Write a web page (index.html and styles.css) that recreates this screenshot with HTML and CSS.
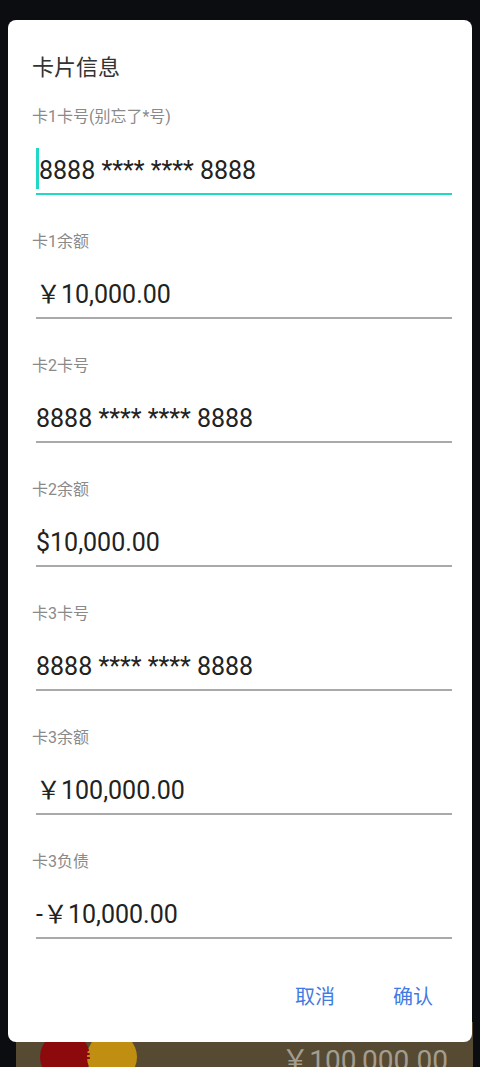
FILE: index.html
```
<!DOCTYPE html>
<html lang="zh-CN">
<head>
<meta charset="UTF-8" />
<meta name="viewport" content="width=device-width, initial-scale=1" />
<title>卡片信息</title>
<link rel="stylesheet" href="styles.css">
</head>
<body>

<div class="dialog">
  <h3 class="dialog-title">卡片信息</h3>

  <div class="field">
    <label>卡1卡号(别忘了*号)</label>
    <div class="input focused"><span class="caret"></span>8888 **** **** 8888</div>
  </div>
  <div class="field">
    <label>卡1余额</label>
    <div class="input">￥10,000.00</div>
  </div>
  <div class="field">
    <label>卡2卡号</label>
    <div class="input">8888 **** **** 8888</div>
  </div>
  <div class="field">
    <label>卡2余额</label>
    <div class="input">$10,000.00</div>
  </div>
  <div class="field">
    <label>卡3卡号</label>
    <div class="input">8888 **** **** 8888</div>
  </div>
  <div class="field">
    <label>卡3余额</label>
    <div class="input">￥100,000.00</div>
  </div>
  <div class="field">
    <label>卡3负债</label>
    <div class="input">-￥10,000.00</div>
  </div>

  <div class="actions">
    <button>取消</button>
    <button>确认</button>
  </div>
</div>

<!-- card behind the dialog -->
<div class="card">
  <svg class="card-logo" width="100" height="40" viewBox="0 0 100 40">
    <defs>
      <clipPath id="overlap">
        <circle cx="25" cy="27" r="25" />
      </clipPath>
    </defs>
    <circle cx="25" cy="27" r="25" fill="#8c0a0c" />
    <circle cx="72" cy="27" r="25" fill="#c08f12" />
    <g clip-path="url(#overlap)" fill="#8c0a0c">
      <rect x="45" y="3" width="30" height="2" />
      <rect x="45" y="7" width="30" height="2" />
      <rect x="45" y="11" width="30" height="2" />
      <rect x="45" y="15" width="30" height="2" />
      <rect x="45" y="19" width="30" height="2" />
      <rect x="45" y="23" width="30" height="2" />
      <rect x="45" y="27" width="30" height="2" />
    </g>
  </svg>
  <div class="card-amount">￥100,000.00</div>
</div>

</body>
</html>
```

FILE: styles.css
```
body {
  margin: 0;
  padding: 20px 0 0 0;
  background: #0c0d11;
  font-family: Roboto, "Noto Sans CJK SC", sans-serif;
  height: 1047px;
  overflow: hidden;
}
.dialog {
  position: relative;
  z-index: 1;
  margin: 0 8px;
  background: #fff;
  border-radius: 8px;
  padding: 33px 20px 23px 24px;
}
.dialog-title {
  margin: 0 0 22px 0;
  font-size: 22px;
  line-height: 30px;
  font-weight: normal;
  color: #333;
}
.field {
  margin-bottom: 35px;
}
.field label {
  display: block;
  font-size: 16px;
  line-height: 24px;
  color: #8a8a8a;
}
.input {
  margin-left: 4px;
  padding: 26px 0 7px 0;
  font-size: 25px;
  line-height: 30px;
  color: #222;
  border-bottom: 2px solid #a9a9a9;
  display: flex;
  align-items: center;
}
.input.focused {
  border-bottom-color: #1fd8c6;
  padding-top: 27px;
  padding-bottom: 7px;
}
.caret {
  width: 3px;
  height: 41px;
  background: #1fd8c6;
  margin: -8px 0 -3px 0;
}
.actions {
  display: flex;
  justify-content: flex-end;
  gap: 20px;
  margin-top: -3px;
}
.actions button {
  background: none;
  border: none;
  padding: 0 19px;
  height: 48px;
  font-family: "Noto Sans CJK SC", sans-serif;
  font-size: 20px;
  color: #3f7be3;
  cursor: pointer;
}
.card {
  margin: -20px 7px 0 16px;
  height: 60px;
  background: #564a33;
  display: flex;
  justify-content: space-between;
  align-items: flex-start;
  padding: 0 25px 0 24px;
}
.card-logo {
  margin-top: 8px;
}
.card-amount {
  margin-top: 21px;
  font-size: 28px;
  line-height: 36px;
  color: #a39d90;
}
```
